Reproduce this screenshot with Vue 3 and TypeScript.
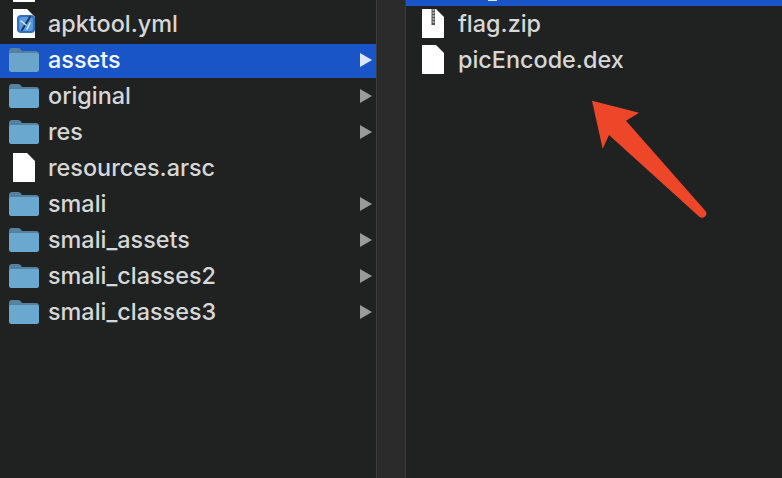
<template>
  <div class="browser">
    <section class="column left">
      <div class="clip">
        <svg class="doc" width="22" height="29" viewBox="0 0 22 29"><path d="M0 0H14L22 8V29H0Z" fill="#fff" /></svg>
      </div>
      <div v-for="item in leftItems" :key="item.name" class="row" :class="{ selected: item.selected }">
        <span class="icon-slot">
          <svg v-if="item.kind === 'folder'" width="30" height="24" viewBox="0 0 30 24">
            <path d="M0 3Q0 0 3 0H9Q11 0 12 1.500L13 3H27Q30 3 30 6V8H0Z" fill="#55839f" />
            <path d="M0 6.500Q0 5 2 5H28Q30 5 30 6.500V21.500Q30 24 27.500 24H2.500Q0 24 0 21.500Z" :fill="item.selected ? '#6ba5cc' : '#6ba8d0'" />
          </svg>
          <svg v-else-if="item.kind === 'swift'" class="doc" width="22" height="29" viewBox="0 0 22 29">
            <path d="M0 0H14L22 8V29H0Z" fill="#fff" />
            <rect x="4" y="6" width="18" height="18" rx="4" fill="#2f6fbe" />
            <rect x="6" y="8" width="14" height="14" rx="3" fill="#5a9be0" />
            <path d="M9 21L17 8" stroke="#17365f" stroke-width="2" fill="none" stroke-linecap="round" />
            <path d="M8 12L13 16M14 20L17 14" stroke="#d5e6fa" stroke-width="1.500" fill="none" stroke-linecap="round" />
          </svg>
          <svg v-else class="doc" width="22" height="29" viewBox="0 0 22 29"><path d="M0 0H14L22 8V29H0Z" fill="#fff" /></svg>
        </span>
        <span class="name">{{ item.name }}</span>
        <svg v-if="item.kind === 'folder'" class="chevron" width="12" height="14" viewBox="0 0 12 14">
          <path d="M0 0L12 7L0 14Z" :fill="item.selected ? '#dbe8fb' : '#999a9a'" />
        </svg>
      </div>
    </section>

    <div class="scroll-track"></div>

    <section class="column right">
      <div class="clip selected-strip"><span class="descender"></span></div>
      <div v-for="item in rightItems" :key="item.name" class="row">
        <span class="icon-slot right-slot">
          <svg class="doc" width="22" height="29" viewBox="0 0 22 29">
            <path d="M0 0H14L22 8V29H0Z" fill="#fff" />
            <path v-if="item.zip" d="M9.500 0H13V16H9.500Z" fill="#555" />
            <path v-if="item.zip" d="M10.500 1H12.500M10.500 4H12.500M10.500 7H12.500M10.500 10H12.500M10.500 13H12.500" stroke="#fff" stroke-width="1.200" />
          </svg>
        </span>
        <span class="name">{{ item.name }}</span>
      </div>
    </section>

    <svg class="arrow" width="130" height="130" viewBox="585 95 130 130">
      <path d="M592 100.700L639 112.700L626 120.700L705.500 211Q707.500 214 705 216.500Q702 219 699 216.500L609 135L602.700 148.700Z" fill="#ee4629" />
    </svg>
  </div>
</template>

<script setup lang="ts">
interface Entry {
  name: string
  kind?: 'folder' | 'swift' | 'file'
  selected?: boolean
  zip?: boolean
}

const leftItems: Entry[] = [
  { name: 'apktool.yml', kind: 'swift' },
  { name: 'assets', kind: 'folder', selected: true },
  { name: 'original', kind: 'folder' },
  { name: 'res', kind: 'folder' },
  { name: 'resources.arsc', kind: 'file' },
  { name: 'smali', kind: 'folder' },
  { name: 'smali_assets', kind: 'folder' },
  { name: 'smali_classes2', kind: 'folder' },
  { name: 'smali_classes3', kind: 'folder' },
]

const rightItems: Entry[] = [
  { name: 'flag.zip', zip: true },
  { name: 'picEncode.dex' },
]
</script>

<style scoped>
.browser {
  position: relative;
  display: flex;
  width: 782px;
  height: 478px;
  overflow: hidden;
  background: #202222;
  font-family: Inter, "Liberation Sans", sans-serif;
  font-size: 23.4px;
  font-weight: 450;
  color: #d6d7d7;
}
.column {
  display: flex;
  flex-direction: column;
}
.left {
  width: 376px;
}
.right {
  flex: 1;
}
.clip {
  display: flex;
  align-items: flex-end;
  flex: none;
  height: 6px;
  overflow: hidden;
  padding-left: 13px;
}
.clip .doc {
  flex: none;
  margin-bottom: 4px;
}
.selected-strip {
  padding-left: 82px;
  background: #1a55c8;
  align-items: flex-start;
}
.descender {
  width: 9px;
  height: 1px;
  background: #dfe9fa;
}
.row {
  display: flex;
  align-items: center;
  flex: none;
  box-sizing: border-box;
  height: 36px;
}
.row.selected {
  border-top: 2px solid transparent;
  padding-bottom: 2px;
  background: #1a55c8 padding-box;
  color: #f4f8ff;
}
.row .doc {
  margin-bottom: 1px;
}
.icon-slot {
  display: flex;
  justify-content: center;
  width: 48px;
  flex: none;
}
.right-slot {
  width: 52px;
  padding-left: 2px;
  box-sizing: border-box;
}
.name {
  flex: 1;
  padding-bottom: 2px;
  white-space: nowrap;
}
.chevron {
  margin-right: 4px;
}
.scroll-track {
  flex: none;
  width: 30px;
  box-sizing: border-box;
  background: #2b2b2b;
  border-left: 1px solid #3a3b3b;
  border-right: 1px solid #3a3b3b;
}
.arrow {
  position: absolute;
  left: 585px;
  top: 95px;
}
</style>
